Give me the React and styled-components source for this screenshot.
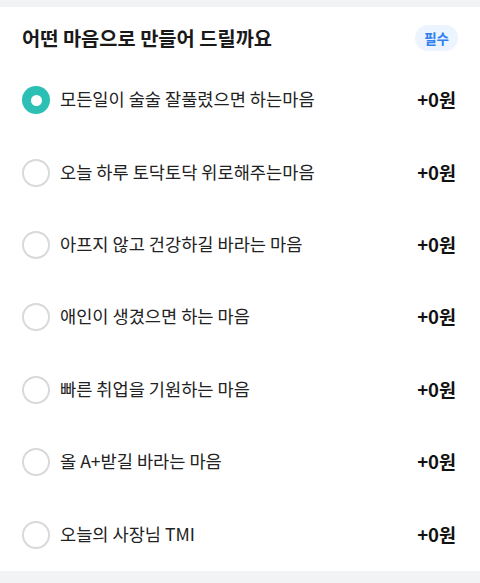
import styled, { createGlobalStyle } from "styled-components";

const GlobalStyle = createGlobalStyle`
  body {
    margin: 0;
    background: #f2f3f5;
    font-family: "Noto Sans CJK KR", "Noto Sans", sans-serif;
  }
`;

const Page = styled.div`
  width: 480px;
  height: 583px;
  background: #f2f3f5;
  padding-top: 7px;
  box-sizing: border-box;
`;

const Section = styled.section`
  background: #fff;
  padding: 0 24px 0 22px;
`;

const Header = styled.div`
  height: 57px;
  display: flex;
  align-items: center;
  justify-content: space-between;
  padding-top: 4px;
  box-sizing: border-box;
`;

const Title = styled.h2`
  margin: 0;
  font-size: 19.8px;
  font-weight: 700;
  color: #191919;
`;

const Badge = styled.span`
  background: #ebf4ff;
  color: #2f7ff0;
  font-size: 13.5px;
  font-weight: 700;
  line-height: 18px;
  padding: 4px 9px;
  border-radius: 14px;
  margin-right: -2px;
`;

const Option = styled.label`
  height: 72.43px;
  display: flex;
  align-items: center;
  cursor: pointer;
`;

const Radio = styled.span`
  width: 28px;
  height: 28px;
  border-radius: 50%;
  box-sizing: border-box;
  flex-shrink: 0;
  display: flex;
  align-items: center;
  justify-content: center;
  background: ${(p) => (p.checked ? "#2cbfb4" : "#fff")};
  border: ${(p) => (p.checked ? "none" : "2px solid #d9d9d9")};

  &::after {
    content: "";
    display: ${(p) => (p.checked ? "block" : "none")};
    width: 11px;
    height: 11px;
    border-radius: 50%;
    background: #fff;
  }
`;

const Label = styled.span`
  flex: 1;
  margin: 0 0 3px 10px;
  font-size: 17.6px;
  color: #222;
`;

const Price = styled.span`
  margin-bottom: 2px;
  font-size: 18.5px;
  font-weight: 700;
  color: #111;
`;

const options = [
  "모든일이 술술 잘풀렸으면 하는마음",
  "오늘 하루 토닥토닥 위로해주는마음",
  "아프지 않고 건강하길 바라는 마음",
  "애인이 생겼으면 하는 마음",
  "빠른 취업을 기원하는 마음",
  "올 A+받길 바라는 마음",
  "오늘의 사장님 TMI",
];

export default function App() {
  return (
    <Page>
      <GlobalStyle />
      <Section>
        <Header>
          <Title>어떤 마음으로 만들어 드릴까요</Title>
          <Badge>필수</Badge>
        </Header>
        {options.map((text, i) => (
          <Option key={text}>
            <Radio checked={i === 0} />
            <Label>{text}</Label>
            <Price>+0원</Price>
          </Option>
        ))}
      </Section>
    </Page>
  );
}
